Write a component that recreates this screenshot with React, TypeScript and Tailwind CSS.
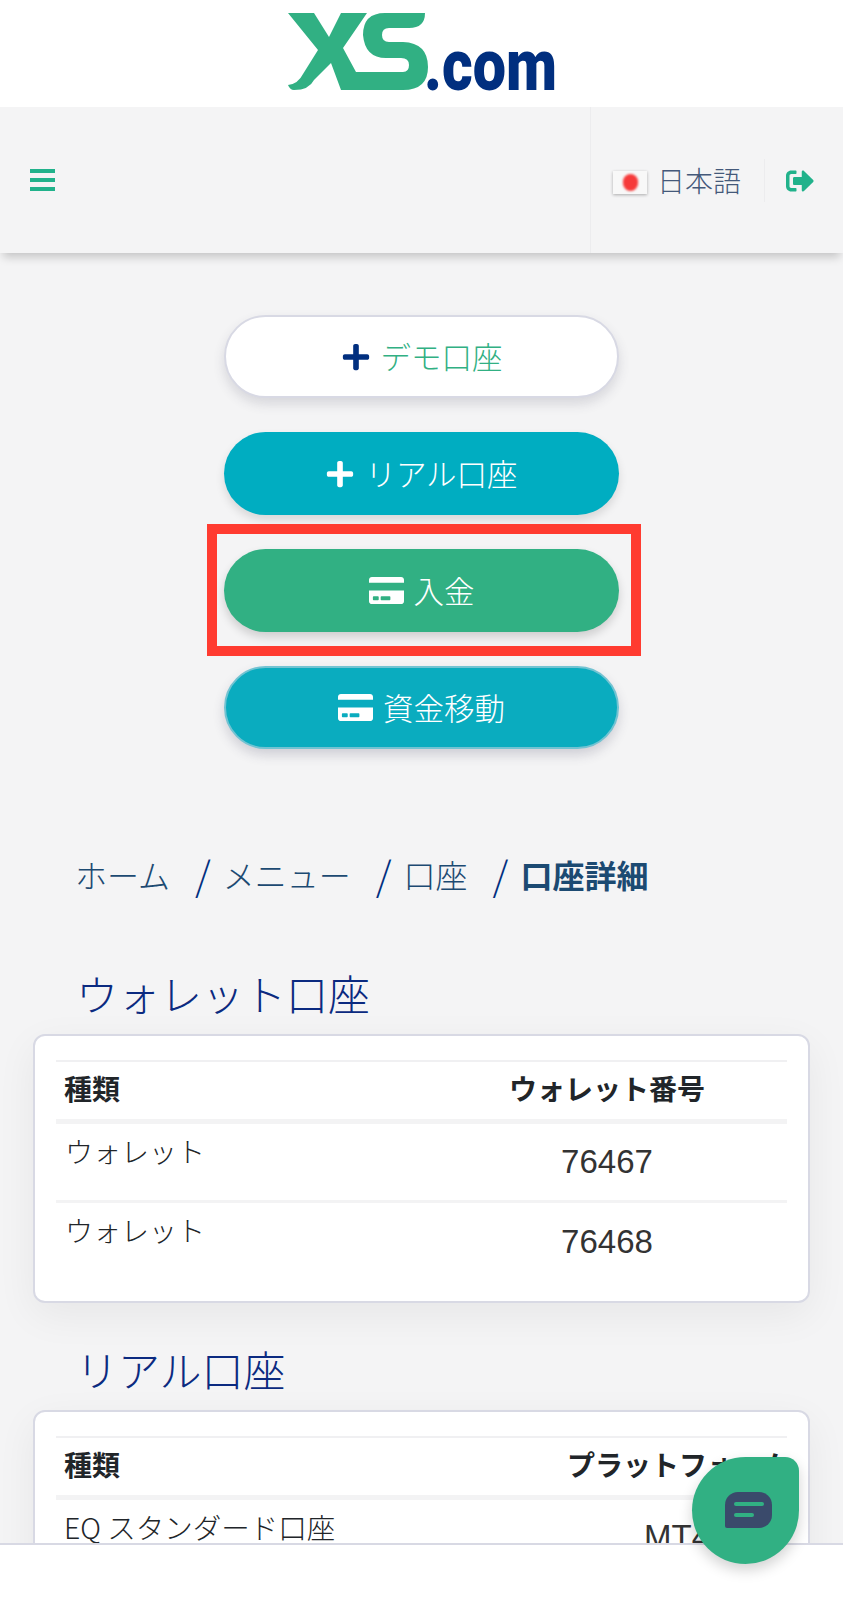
import type { ReactNode } from "react"
import { FaCreditCard, FaPlus, FaSignOutAlt } from "react-icons/fa"

const Logo = () => (
  <svg viewBox="7 8 268 77" className="w-[268px] h-[77px] overflow-visible">
    <path
      fill="#31b083"
      d="M7 8H33L48 32L60 8H86L62 43L75 67H122Q128 67 128 60Q128 53 120 53H105Q84 53 82 30Q82 8 104 8H144Q144 23 128 23H108Q101 23 101 30Q101 37 108 37H122Q147 38 147 62Q147 85 122 85H60L50 58L33 75Q28 85 13 85Q9 85 7 80Q17 79 22 69L37 45Z"
    />
    <text
      x="143"
      y="85"
      textLength="133"
      lengthAdjust="spacingAndGlyphs"
      fill="#012f7f"
      className="font-['Roboto',sans-serif] font-black text-[72px]"
    >
      .com
    </text>
  </svg>
)

function ActionButton({ icon, className, children }: { icon: ReactNode; className: string; children: ReactNode }) {
  return (
    <button className={`flex items-center justify-center gap-[10px] w-[395px] h-[83px] rounded-full text-[30.5px] font-light ${className}`}>
      {icon}
      <span>{children}</span>
    </button>
  )
}

const Slash = () => <span className="ml-[25px] mr-[12px] text-[#012f7f] text-[40px] leading-[40px]">/</span>

function Table({ secondHeader, narrow, children }: { secondHeader: string; narrow: boolean; children: ReactNode }) {
  return (
    <table className="w-full table-fixed border-t-2 border-[#f0f0f2]">
      <thead>
        <tr className="border-b-[5px] border-[#f3f3f4] h-[60px]">
          <th className={`text-left pl-[8px] pb-[5px] text-[28px] font-bold text-[#212529] ${narrow ? "w-[511px]" : "w-[371px]"}`}>種類</th>
          <th className="text-center pb-[5px] text-[28px] font-bold text-[#212529] whitespace-nowrap">{secondHeader}</th>
        </tr>
      </thead>
      <tbody>{children}</tbody>
    </table>
  )
}

function WalletRow({ number }: { number: string }) {
  return (
    <tr className="border-b-[3px] border-[#f3f3f4] last:border-b-0 h-[80px]">
      <td className="align-top pl-[9px] pt-[8px] text-[28px] leading-[38px] font-light text-[#212529]">ウォレット</td>
      <td className="text-center font-['Liberation_Sans',sans-serif] text-[33px] text-[#333333]">{number}</td>
    </tr>
  )
}

function Card({ children, className }: { children: ReactNode; className: string }) {
  return (
    <div className={`mx-[33px] px-[21px] pt-[24px] bg-white border-2 border-[#d8d9e4] rounded-[12px] shadow-[0_12px_40px_rgba(0,0,0,0.06)] ${className}`}>
      {children}
    </div>
  )
}

export default function App() {
  return (
    <div className="relative h-[1600px] overflow-hidden bg-[#f4f4f5] font-['Noto_Sans_CJK_JP',sans-serif]">
      <header className="flex justify-center h-[107px] pt-[13px] bg-white">
        <Logo />
      </header>

      <nav className="flex h-[146px] bg-[#f4f4f5] shadow-[0_7px_9px_-3px_rgba(0,0,0,0.2)]">
        <div className="flex-1 pl-[30px] pt-[62px]">
          <div className="flex flex-col gap-[5px] w-[25px]">
            <div className="h-[4px] bg-[#21b28b]" />
            <div className="h-[4px] bg-[#21b28b]" />
            <div className="h-[4px] bg-[#21b28b]" />
          </div>
        </div>
        <div className="flex items-center w-[253px] pl-[22px] border-l border-[#ececee]">
          <div className="flex items-center justify-center w-[34px] h-[23px] mt-[4px] bg-[#f8f8f8] shadow-[0_1px_3px_rgba(0,0,0,0.3)]">
            <div className="w-[15px] h-[17px] rounded-full bg-[#f63a3a] blur-[1px]" />
          </div>
          <span className="ml-[10px] text-[28px] font-light text-[#44597a]">日本語</span>
          <div className="flex items-center h-[43px] ml-[23px] pl-[21px] mt-[1px] border-l border-[#ececee]">
            <FaSignOutAlt size={28} className="text-[#21b28b]" />
          </div>
        </div>
      </nav>

      <main>
        <div className="flex flex-col items-center gap-[34px] pt-[62px]">
          <ActionButton
            icon={<FaPlus size={30} className="text-[#012f7f]" />}
            className="bg-white border-2 border-[#d8d9e4] text-[#31b083] shadow-[0_6px_12px_rgba(60,60,90,0.16)]"
          >
            デモ口座
          </ActionButton>
          <ActionButton
            icon={<FaPlus size={30} className="text-white" />}
            className="bg-[#00adc1] text-white shadow-[0_5px_10px_rgba(0,0,0,0.12)]"
          >
            リアル口座
          </ActionButton>
          <ActionButton
            icon={<FaCreditCard size={35} className="text-white" />}
            className="bg-[#31b083] text-white shadow-[0_5px_10px_rgba(0,0,0,0.16)]"
          >
            入金
          </ActionButton>
          <ActionButton
            icon={<FaCreditCard size={35} className="text-white" />}
            className="bg-[#0aacbf] border-2 border-[#72c3d2] text-white shadow-[0_6px_12px_rgba(60,60,90,0.2)]"
          >
            資金移動
          </ActionButton>
        </div>

        <div className="flex items-center h-[40px] mt-[105px] pl-[75px] text-[32px] font-light text-[#1c4a72] whitespace-nowrap">
          <span>ホーム</span>
          <Slash />
          <span>メニュー</span>
          <Slash />
          <span>口座</span>
          <Slash />
          <span className="font-bold">口座詳細</span>
        </div>

        <h2 className="mt-[71px] mb-[13px] pl-[76px] text-[42px] leading-[56px] font-light text-[#0b2a80]">ウォレット口座</h2>
        <Card className="h-[269px]">
          <Table secondHeader="ウォレット番号" narrow={false}>
            <WalletRow number="76467" />
            <WalletRow number="76468" />
          </Table>
        </Card>

        <h2 className="mt-[38px] mb-[13px] pl-[76px] text-[42px] leading-[56px] font-light text-[#0b2a80]">リアル口座</h2>
        <Card className="h-[300px]">
          <Table secondHeader="プラットフォーム" narrow={true}>
            <tr className="h-[77px]">
              <td className="align-top pl-[8px] pt-[8px] text-[28.5px] leading-[38px] font-light text-[#212529] whitespace-nowrap">
                EQ スタンダード口座
              </td>
              <td className="text-center font-['Liberation_Sans',sans-serif] text-[33px] text-[#333333]">MT4</td>
            </tr>
          </Table>
        </Card>
      </main>

      {/* Red annotation box round the deposit button */}
      <div className="absolute left-[207px] top-[524px] w-[434px] h-[132px] border-[10px] border-[#ff3b30]" />

      {/* Bottom bar */}
      <div className="absolute left-0 right-0 bottom-0 h-[57px] bg-white border-t-2 border-[#d8d9e4]" />

      {/* Chat launcher */}
      <div className="absolute left-[692px] top-[1457px] flex items-center justify-center w-[107px] h-[107px] rounded-[54px] rounded-tr-[14px] bg-[#31b083] shadow-[0_6px_14px_rgba(0,0,0,0.18)]">
        <div className="flex flex-col gap-[7px] w-[47px] h-[36px] pt-[10px] pl-[9px] mt-[-2px] ml-[6px] rounded-[13px] rounded-bl-[2px] bg-[#3a4a6b]">
          <div className="w-[30px] h-[4px] rounded-full bg-[#31b083]" />
          <div className="w-[20px] h-[4px] rounded-full bg-[#31b083]" />
        </div>
      </div>
    </div>
  )
}
